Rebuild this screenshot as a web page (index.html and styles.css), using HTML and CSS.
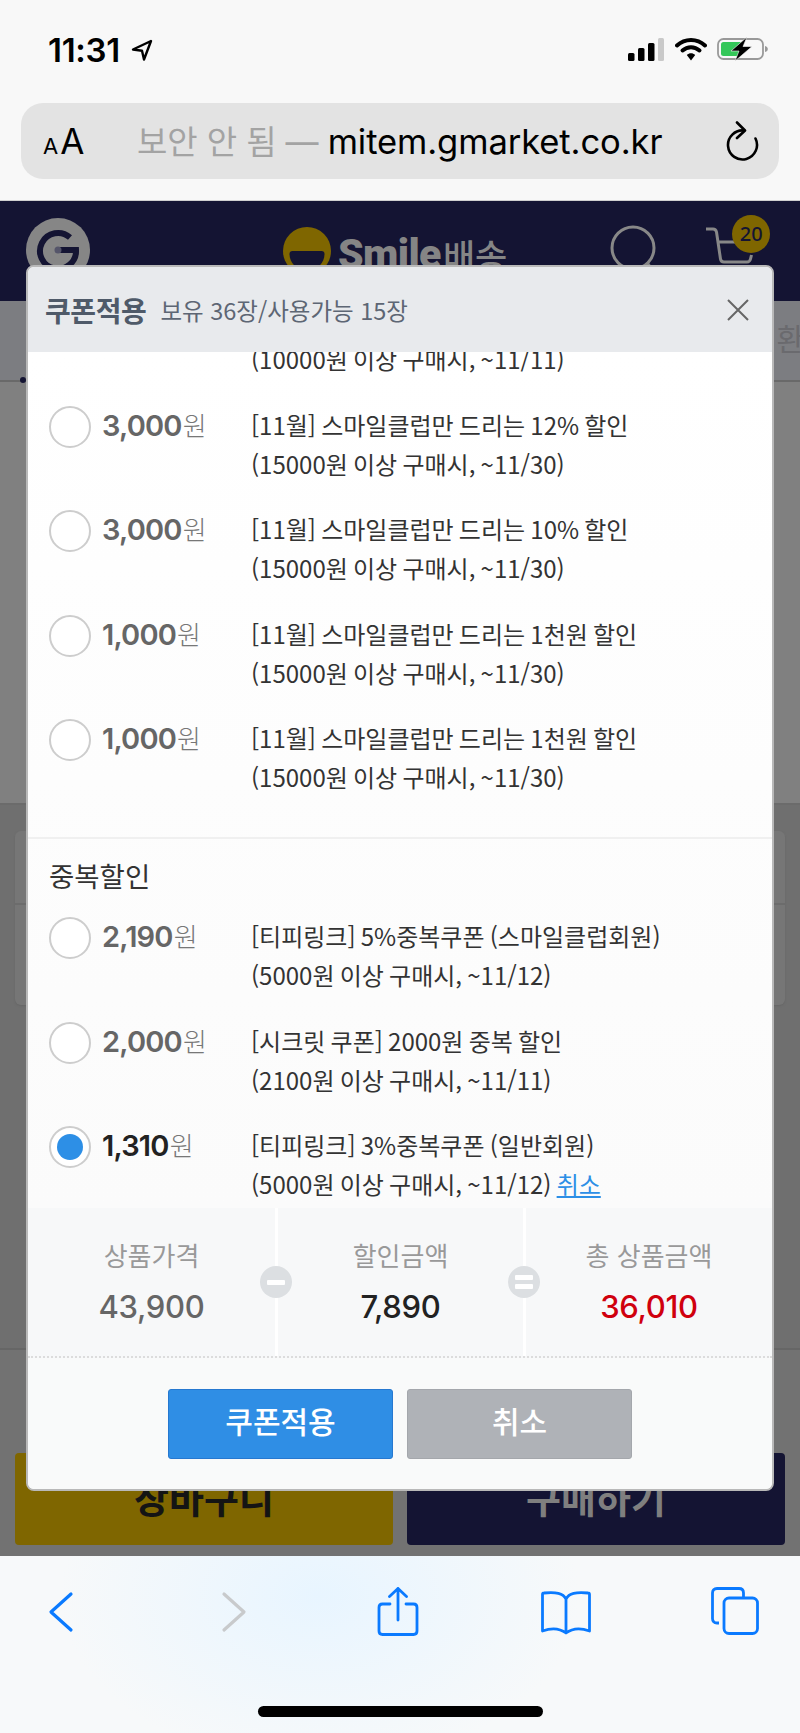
FILE: index.html
```html
<!DOCTYPE html>
<html lang="ko">
<head>
<meta charset="utf-8">
<title>쿠폰적용</title>
<link rel="stylesheet" href="styles.css">
</head>
<body>
<div class="phone">
  <div class="chrome-top">
    <div class="status">
      <div class="status-left">
        <span class="time">11:31</span>
        <svg class="loc" viewBox="0 0 22 22"><path d="M20 2 2 10.500l9 1.200 2 8.800z" fill="none" stroke="#000" stroke-width="2.400" stroke-linejoin="round"/></svg>
      </div>
      <div class="status-right">
        <svg class="signal" viewBox="0 0 36 23"><rect x="0" y="15" width="6.500" height="8" rx="1.500" fill="#000"/><rect x="10" y="10" width="6.500" height="13" rx="1.500" fill="#000"/><rect x="20" y="5" width="6.500" height="18" rx="1.500" fill="#000"/><rect x="30" y="0" width="6" height="23" rx="1.500" fill="#c9c9c9"/></svg>
        <svg class="wifi" viewBox="0 0 32 24"><path d="M2 8.500C10 1 22 1 30 8.500" fill="none" stroke="#000" stroke-width="4" stroke-linecap="round"/><path d="M7.500 13.500c5-4.500 12-4.500 17 0" fill="none" stroke="#000" stroke-width="4" stroke-linecap="round"/><path d="m11.800 18c2.500-2.300 5.900-2.300 8.400 0L16 23.500z" fill="#000"/></svg>
        <svg class="battery" viewBox="0 0 52 24"><rect x="1" y="2" width="45" height="20" rx="5.500" fill="none" stroke="#999" stroke-width="1.800"/><path d="M48 9c2 .5 2.800 1.500 2.800 3s-.8 2.500-2.800 3z" fill="#999"/><rect x="4" y="5" width="21" height="14" rx="2.500" fill="#34c759"/><path d="M30 0 14 14h8L18 24 35 9.500h-9z" fill="#000" stroke="#f8f8f8" stroke-width=".6"/></svg>
      </div>
    </div>
    <div class="addr">
      <span class="aa"><span class="aa-s">A</span><span class="aa-l">A</span></span>
      <span class="url"><span class="insecure">보안 안 됨 — </span>mitem.gmarket.co.kr</span>
      <svg class="reload" viewBox="0 0 34 40"><path d="M19 9.500A14.500 14.500 0 1 0 30.500 17.500" fill="none" stroke="#000" stroke-width="2.600" stroke-linecap="round"/><path d="m12 1.500 8 8-8 7.500" fill="none" stroke="#000" stroke-width="2.600" stroke-linecap="round" stroke-linejoin="round"/></svg>
    </div>
  </div>

  <div class="page">
    <header class="site-head">
      <svg class="g-logo" viewBox="0 0 64 64"><circle cx="32" cy="32" r="32" fill="#868686"/><path d="M44 19.500A18 18 0 1 0 50 32H33" fill="none" stroke="#141433" stroke-width="6"/><circle cx="32" cy="32" r="3.500" fill="#55556a"/></svg>
      <div class="smile">
        <svg class="smile-mark" viewBox="0 0 48 60"><circle cx="24" cy="24" r="24" fill="#7f6600"/><path d="M6.500 27c0-2 1-3 3-3h29c2 0 3 1 3 3 0 9-7 16-17.500 16S6.500 36 6.500 27z" fill="#141433"/></svg>
        <span class="smile-en">Smile</span><span class="smile-ko">배송</span>
      </div>
      <svg class="search" viewBox="0 0 52 60"><circle cx="24" cy="24" r="21" fill="none" stroke="#888" stroke-width="3"/><path d="m38 39 10 12" stroke="#888" stroke-width="3"/></svg>
      <div class="cart">
        <svg class="cart-ico" viewBox="0 0 50 42"><path d="M1 2h7c2 0 3 1 3.500 3l4 27c.3 2 1.500 3 3.500 3h23c2 0 3-1 3.500-3l1-4M12 15h30" fill="none" stroke="#888" stroke-width="3" stroke-linejoin="round"/></svg>
        <span class="cart-badge">20</span>
      </div>
    </header>
    <div class="tabs"><span class="tab-dot"></span><span class="tab-text">환</span></div>
    <div class="band-a"></div>
    <div class="band-b">
      <div class="ghost-card"><div class="ghost-row"></div><div class="ghost-row"></div></div>
    </div>
    <div class="buybar">
      <div class="buy buy-cart">장바구니</div>
      <div class="buy buy-now">구매하기</div>
    </div>

    <div class="modal">
      <div class="modal-head">
        <strong class="modal-title">쿠폰적용</strong>
        <span class="modal-sub">보유 36장/사용가능 15장</span>
        <svg class="close" viewBox="0 0 22 22"><path d="m1 1 20 20M21 1 1 21" stroke="#666" stroke-width="2"/></svg>
      </div>
      <div class="list">
        <div class="group group-first">
          <div class="row">
            <span class="radio"></span>
            <div class="amount"><b>3,000</b>원</div>
            <div class="info"><p>[11월] 스마일클럽만 드리는 15% 할인</p><p>(10000원 이상 구매시, ~11/11)</p></div>
          </div>
          <div class="row">
            <span class="radio"></span>
            <div class="amount"><b>3,000</b>원</div>
            <div class="info"><p>[11월] 스마일클럽만 드리는 12% 할인</p><p>(15000원 이상 구매시, ~11/30)</p></div>
          </div>
          <div class="row">
            <span class="radio"></span>
            <div class="amount"><b>3,000</b>원</div>
            <div class="info"><p>[11월] 스마일클럽만 드리는 10% 할인</p><p>(15000원 이상 구매시, ~11/30)</p></div>
          </div>
          <div class="row">
            <span class="radio"></span>
            <div class="amount"><b>1,000</b>원</div>
            <div class="info"><p>[11월] 스마일클럽만 드리는 1천원 할인</p><p>(15000원 이상 구매시, ~11/30)</p></div>
          </div>
          <div class="row">
            <span class="radio"></span>
            <div class="amount"><b>1,000</b>원</div>
            <div class="info"><p>[11월] 스마일클럽만 드리는 1천원 할인</p><p>(15000원 이상 구매시, ~11/30)</p></div>
          </div>
        </div>
        <div class="group">
          <h3 class="group-title">중복할인</h3>
          <div class="row">
            <span class="radio"></span>
            <div class="amount"><b>2,190</b>원</div>
            <div class="info"><p>[티피링크] 5%중복쿠폰 (스마일클럽회원)</p><p>(5000원 이상 구매시, ~11/12)</p></div>
          </div>
          <div class="row">
            <span class="radio"></span>
            <div class="amount"><b>2,000</b>원</div>
            <div class="info"><p>[시크릿 쿠폰] 2000원 중복 할인</p><p>(2100원 이상 구매시, ~11/11)</p></div>
          </div>
          <div class="row row-on">
            <span class="radio radio-on"></span>
            <div class="amount"><b>1,310</b>원</div>
            <div class="info"><p>[티피링크] 3%중복쿠폰 (일반회원)</p><p>(5000원 이상 구매시, ~11/12) <a class="undo">취소</a></p></div>
          </div>
        </div>
      </div>
      <div class="summary">
        <div class="cell"><span class="cell-label">상품가격</span><span class="cell-val val-price">43,900</span></div>
        <div class="cell"><span class="cell-label">할인금액</span><span class="cell-val val-disc">7,890</span><span class="op op-minus"><i></i></span></div>
        <div class="cell"><span class="cell-label">총 상품금액</span><span class="cell-val val-total">36,010</span><span class="op op-eq"><i></i><i></i></span></div>
      </div>
      <div class="actions">
        <div class="btn btn-apply">쿠폰적용</div>
        <div class="btn btn-cancel">취소</div>
      </div>
    </div>
  </div>

  <div class="toolbar">
    <div class="tools">
      <svg class="tool" viewBox="0 0 44 50"><path d="M32 7 12 25l20 18" fill="none" stroke="#0a7aff" stroke-width="3.200" stroke-linecap="round" stroke-linejoin="round"/></svg>
      <svg class="tool tool-fwd" viewBox="0 0 44 50"><path d="M12 7l20 18-20 18" fill="none" stroke="#c8cacc" stroke-width="3.200" stroke-linecap="round" stroke-linejoin="round"/></svg>
      <svg class="tool" viewBox="0 0 44 50"><path d="M14 17H6.500C4 17 3 18 3 20.500V44c0 2.500 1 3.500 3.500 3.500h31c2.500 0 3.500-1 3.500-3.500V20.500c0-2.500-1-3.500-3.500-3.500H30M22 33V1.500M13.500 9.500 22 1.500l8.500 8" fill="none" stroke="#0a7aff" stroke-width="2.800" stroke-linecap="round" stroke-linejoin="round"/></svg>
      <svg class="tool" viewBox="0 0 50 50"><path d="M25 12C22 6 15 5 3 6c-1 0-1.500.5-1.500 1.500V44c8-3 17-3 23.500 2 6.500-5 15.500-5 23.500-2V7.500c0-1-.5-1.500-1.500-1.500-12-1-19 0-22 6zM25 12v34" fill="none" stroke="#0a7aff" stroke-width="2.800" stroke-linejoin="round"/></svg>
      <svg class="tool" viewBox="0 0 48 48"><path d="M8 36H6c-3 0-4.500-1.500-4.500-4.500V6C1.500 3 3 1.500 6 1.500h22c3 0 4.500 1.500 4.500 4.500v4" fill="none" stroke="#0a7aff" stroke-width="2.800"/><rect x="13" y="11" width="33.500" height="35.500" rx="5" fill="none" stroke="#0a7aff" stroke-width="2.800"/></svg>
    </div>
    <div class="home-bar"></div>
  </div>
</div>
</body>
</html>
```

FILE: styles.css
```css
* { box-sizing: border-box; }
html, body { margin: 0; padding: 0; }
body { font-family: "Noto Sans CJK KR", "Noto Sans", sans-serif; background: #f8f8f8; }
p, h3 { margin: 0; font-weight: 400; }

.phone { width: 800px; height: 1733px; display: flex; flex-direction: column; overflow: hidden; }

/* Safari top */
.chrome-top { height: 201px; background: #f8f8f8; border-bottom: 1px solid #cfcfcf; flex: none; }
.status { height: 103px; display: flex; justify-content: space-between; align-items: flex-start; padding: 32px 31px 0 48px; }
.status-left { display: flex; align-items: center; gap: 11px; }
.time { font-family: Inter, sans-serif; font-weight: 600; font-size: 33px; line-height: 36px; color: #000; letter-spacing: -.3px; }
.loc { width: 22px; height: 22px; }
.status-right { display: flex; align-items: center; padding-top: 5px; }
.signal { width: 36px; height: 23px; margin-right: 11px; }
.wifi { width: 32px; height: 24px; margin-right: 10px; }
.battery { width: 52px; height: 24px; }

.addr { margin: 0 21px; height: 76px; background: #e3e3e3; border-radius: 22px; display: flex; align-items: center; padding: 0 20px 0 22px; }
.aa { width: 94px; display: flex; align-items: baseline; font-family: Inter, sans-serif; color: #000; flex: none; }
.aa-s { font-size: 22px; margin-right: 2px; }
.aa-l { font-size: 35px; }
.url { flex: 1; font-family: Inter, "Noto Sans CJK KR", sans-serif; font-size: 34.600px; line-height: 40px; color: #000; white-space: nowrap; letter-spacing: -.1px; }
.insecure { color: #a3a3a3; font-size: 33px; }
.reload { width: 34px; height: 40px; flex: none; }

/* Dimmed page */
.page { position: relative; flex: 1; display: flex; flex-direction: column; min-height: 0; background: #737373; }
.site-head { height: 100px; background: #141433; display: flex; align-items: flex-start; position: relative; flex: none; padding: 17px 0 0 26px; }
.g-logo { width: 64px; height: 64px; flex: none; margin-top: 0; }
.smile { display: flex; align-items: flex-start; margin-left: 193px; flex: none; color: #858585; margin-top: 9px; }
.smile-mark { width: 48px; height: 60px; margin-right: 7px; }
.smile-en { font-family: Roboto, sans-serif; font-weight: 900; font-size: 41px; line-height: 48px; letter-spacing: -.6px; margin-top: 3px; }
.smile-ko { font-weight: 500; font-size: 35px; line-height: 48px; margin-left: 2px; margin-top: 4px; }
.search { width: 52px; height: 60px; margin-left: 102px; margin-top: 6px; flex: none; }
.cart { position: relative; width: 50px; height: 42px; margin-left: 44px; margin-top: 9px; flex: none; }
.cart-ico { width: 50px; height: 42px; display: block; }
.cart-badge { position: absolute; left: 27px; top: -12px; width: 38px; height: 38px; border-radius: 50%; background: #7f6600; color: #141433; font-family: "Noto Sans", sans-serif; font-weight: 500; font-size: 20px; line-height: 38px; text-align: center; }

.tabs { height: 81px; flex: none; background: #7c7d81; border-bottom: 2px solid #696969; display: flex; justify-content: flex-end; align-items: flex-start; position: relative; padding-top: 16px; color: #6a6a6e; }
.tab-text { font-size: 30px; line-height: 40px; margin-right: -4px; }
.tab-dot { position: absolute; left: 20px; bottom: -3px; width: 6px; height: 6px; border-radius: 50%; background: #141433; }
.band-a { height: 423px; flex: none; background: #808080; border-bottom: 2px solid #6b6b6b; }
.band-b { height: 545px; flex: none; background: #6f6f6f; border-bottom: 2px solid #666; padding: 26px 15px 0; }
.ghost-card { height: 174px; background: #767676; border-radius: 6px; box-shadow: 0 1px 2px #666; }
.ghost-row { height: 74px; border-bottom: 2px solid #6c6c6c; }
.ghost-row + .ghost-row { border: 0; }
.buybar { flex: 1; min-height: 0; background: #727272; display: flex; gap: 14px; padding: 103px 15px 11px; }
.buy { flex: 1; border-radius: 4px; display: flex; align-items: center; justify-content: center; font-weight: 700; font-size: 38px; padding-bottom: 6px; }
.buy-cart { background: #7f6600; color: #141414; }
.buy-now { background: #141433; color: #7f7f7f; }

/* Modal */
.modal { position: absolute; left: 26px; top: 64px; width: 748px; height: 1226px; border: 2px solid #b9b9b9; border-radius: 8px; background: #fdfdfd; display: flex; flex-direction: column; overflow: hidden; }
.modal-head { height: 85px; flex: none; background: #e8eaed; display: flex; align-items: center; padding: 0 23px 0 17px; color: #4f5a69; }
.modal-title { font-size: 28px; font-weight: 700; letter-spacing: -.4px; }
.modal-sub { font-size: 23.500px; color: #5d6674; margin-left: 14px; flex: 1; }
.close { width: 22px; height: 22px; }

.list { height: 856px; flex: none; overflow: hidden; background: linear-gradient(#fff, #fbfbfb); }
.group-first { margin-top: -51px; padding-bottom: 13px; border-bottom: 2px solid #f0f0f0; }
.group-title { height: 78px; padding: 18px 0 0 21px; font-size: 27.500px; line-height: 36px; color: #333; }
.row { display: flex; align-items: flex-start; height: 78px; margin-bottom: 26.600px; padding-left: 21px; }
.radio { width: 42px; height: 42px; border-radius: 50%; border: 2.500px solid #cdcdcd; background: #fff; margin-top: 0; flex: none; display: flex; align-items: center; justify-content: center; }
.radio-on::after { content: ""; width: 26px; height: 26px; border-radius: 50%; background: #2d8fe6; }
.amount { width: 149px; margin-left: 11px; margin-top: -1px; font-size: 26px; line-height: 39px; color: #777; flex: none; white-space: nowrap; font-weight: 300; }
.amount b { font-family: Inter, sans-serif; font-size: 29px; font-weight: 600; color: #666; letter-spacing: -.8px; margin-right: 1px; }
.row-on .amount b { color: #222; }
.info { font-size: 24px; line-height: 39px; color: #333; white-space: nowrap; margin-top: -1px; word-spacing: -1.500px; }
.undo { color: #2d8fe6; text-decoration: underline; }

.summary { height: 150px; flex: none; background: #f7f8f9; display: grid; grid-template-columns: 247px 248px 1fr; border-bottom: 2px dotted #dcdcdc; }
.cell { position: relative; display: flex; flex-direction: column; align-items: center; padding-top: 27px; border-left: 3px solid #fff; }
.cell:first-child { border-left: 0; }
.cell-label { font-size: 26px; line-height: 40px; color: #999; }
.cell-val { font-family: Inter, sans-serif; font-size: 31px; line-height: 44px; font-weight: 500; margin-top: 10px; letter-spacing: -.3px; }
.val-price { color: #666; }
.val-disc { color: #222; }
.val-total { color: #d0000e; }
.op { position: absolute; left: -18px; top: 58px; width: 32px; height: 32px; border-radius: 50%; background: #dcdfe2; display: flex; flex-direction: column; gap: 4px; align-items: center; justify-content: center; }
.op i { width: 18px; height: 5px; background: #fff; border-radius: 1px; }

.actions { flex: 1; background: #f9fafa; display: flex; justify-content: center; gap: 14px; padding-top: 31px; }
.btn { width: 225px; height: 70px; border-radius: 3px; color: #fff; font-size: 30px; font-weight: 500; display: flex; align-items: center; justify-content: center; padding-bottom: 8px; }
.btn-apply { background: #2f8ee5; border: 1px solid #2678d0; }
.btn-cancel { background: #afb2b7; border: 1px solid #a4a7ac; }

/* Safari bottom */
.toolbar { height: 177px; flex: none; background: radial-gradient(ellipse 260px 170px at 320px 40px, #e8f5ff, #f7f9fa 100%); display: flex; flex-direction: column; }
.tools { display: flex; justify-content: space-between; align-items: flex-start; padding: 31px 41px 0 39px; height: 149.500px; flex: none; }
.tool { width: 44px; height: 50px; flex: none; }
.tool:nth-child(4) { width: 50px; }
.tool:nth-child(5) { width: 48px; height: 48px; }
.tool-fwd { margin-left: 8px; }
.home-bar { width: 285px; height: 11px; border-radius: 6px; background: #000; margin: 0 auto; flex: none; }
```
